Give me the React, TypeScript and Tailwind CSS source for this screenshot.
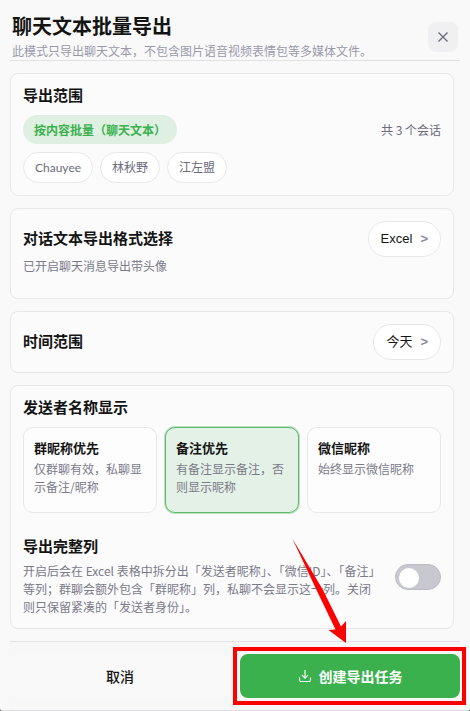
import React, { useState } from 'react'

const chats = ['Chauyee', '林秋野', '江左盟']

const nameModes = [
    { id: 'group', title: '群昵称优先', desc: '仅群聊有效，私聊显示备注/昵称' },
    { id: 'remark', title: '备注优先', desc: '有备注显示备注，否则显示昵称' },
    { id: 'nickname', title: '微信昵称', desc: '始终显示微信昵称' },
]

const Card = ({ children }: { children: React.ReactNode }) => (
    <section className="rounded-lg border border-[#e8e8ea] bg-[#fbfbfb] p-3">{children}</section>
)

const CardTitle = ({ children }: { children: React.ReactNode }) => (
    <h2 className="pb-[2px] text-[15px] leading-[18px] font-bold text-[#141414]">{children}</h2>
)

const PickerButton = ({ value }: { value: string }) => (
    <button
        type="button"
        className="flex h-9 items-center gap-2 rounded-full border border-[#e8e8ea] bg-white px-3 font-['Liberation_Sans','Noto_Sans_CJK_SC',sans-serif] text-[13px] text-[#141414]"
    >
        {value}
        <span className="font-bold text-[#8a8a9c]">&gt;</span>
    </button>
)

const App = () => {
    const [nameMode, setNameMode] = useState('remark')
    const [fullColumns, setFullColumns] = useState(false)

    return (
        <div className="bg-[#777777]">
            <main className="relative rounded-b-[3px] border-b border-[#dcdcde] bg-[#f9f9f9] px-[10px] font-['Noto_Sans_CJK_SC',sans-serif] text-[#141414]">
                {/* HEADER */}
                <header className="flex items-center justify-between border-b border-[#e2e2e5] pt-[14px] pr-[2px] pl-[2px]">
                    <div>
                        <h1 className="text-xl leading-6 font-bold">聊天文本批量导出</h1>
                        <p className="mt-1 text-xs leading-[18px] text-[#9a9aaa]">
                            此模式只导出聊天文本，不包含图片语音视频表情包等多媒体文件。
                        </p>
                    </div>
                    <button
                        type="button"
                        aria-label="关闭"
                        className="flex size-[30px] items-center justify-center rounded-lg bg-[#f0f0f2] text-[#6b6b7b]"
                    >
                        <svg width="12" height="12" viewBox="0 0 12 12" fill="none" stroke="currentColor" strokeWidth="1.4">
                            <path d="M1.5 1.5l9 9M10.5 1.5l-9 9" />
                        </svg>
                    </button>
                </header>

                <div className="flex flex-col gap-3 py-3 pr-[6px]">
                    {/* EXPORT SCOPE */}
                    <Card>
                        <CardTitle>导出范围</CardTitle>
                        <div className="mt-[9px] flex items-center justify-between">
                            <span className="rounded-full bg-[#dfefe2] px-[11px] text-xs leading-[29px] font-bold text-[#3bb14e]">
                                按内容批量（聊天文本）
                            </span>
                            <span className="text-xs text-[#6b6b7b]">共 3 个会话</span>
                        </div>
                        <div className="mt-2 flex flex-wrap gap-[7px]">
                            {chats.map((name) => (
                                <span
                                    key={name}
                                    className="rounded-full border border-[#e8e8ea] bg-white px-[11px] font-['Lato','Noto_Sans_CJK_SC',sans-serif] text-xs leading-[29px] text-[#6b6b7b]"
                                >
                                    {name}
                                </span>
                            ))}
                        </div>
                    </Card>

                    {/* FORMAT */}
                    <Card>
                        <div className="flex items-center justify-between">
                            <CardTitle>对话文本导出格式选择</CardTitle>
                            <PickerButton value="Excel" />
                        </div>
                        <p className="pb-[11px] text-xs leading-[18px] text-[#7a7a8a]">已开启聊天消息导出带头像</p>
                    </Card>

                    {/* TIME RANGE */}
                    <Card>
                        <div className="flex items-center justify-between">
                            <CardTitle>时间范围</CardTitle>
                            <PickerButton value="今天" />
                        </div>
                    </Card>

                    {/* SENDER NAME */}
                    <Card>
                        <CardTitle>发送者名称显示</CardTitle>
                        <div className="mt-[9px] grid grid-cols-3 gap-2">
                            {nameModes.map((mode) => (
                                <button
                                    key={mode.id}
                                    type="button"
                                    aria-pressed={nameMode === mode.id}
                                    onClick={() => setNameMode(mode.id)}
                                    className={`flex min-h-[86px] flex-col gap-[2px] rounded-[10px] border p-[10px] text-left ${
                                        nameMode === mode.id
                                            ? 'border-[#5cbb6b] bg-[#e4f1e7] ring-1 ring-[#5cbb6b]/40'
                                            : 'border-[#e8e8ea] bg-[#fdfdfd]'
                                    }`}
                                >
                                    <span className="text-[13px] leading-5 font-bold">{mode.title}</span>
                                    <span className="text-xs leading-[18px] text-[#7a7a8a]">{mode.desc}</span>
                                </button>
                            ))}
                        </div>

                        <div className="mt-6 flex items-center justify-between gap-4">
                            <div className="flex-1">
                                <CardTitle>
                                    <label htmlFor="full-columns">导出完整列</label>
                                </CardTitle>
                                <p className="mt-[5px] text-xs leading-[18px] text-[#7a7a8a]">
                                    开启后会在 Excel 表格中拆分出「发送者昵称」、「微信ID」、「备注」等列；群聊会额外包含「群昵称」列，私聊不会显示这一列。关闭则只保留紧凑的「发送者身份」。
                                </p>
                            </div>
                            <input
                                id="full-columns"
                                type="checkbox"
                                checked={fullColumns}
                                onChange={(e) => setFullColumns(e.target.checked)}
                                className="h-[26px] w-[46px] shrink-0 appearance-none rounded-full border border-[#bcbcc4] bg-[#c8c8d0] p-[3px] before:block before:size-5 before:rounded-full before:bg-white before:transition checked:bg-[#3bb14e] checked:before:translate-x-5"
                            />
                        </div>
                    </Card>
                </div>

                {/* FOOTER */}
                <footer className="grid grid-cols-2 gap-[10px] border-t border-[#e2e2e5] bg-[#f7f7f7] py-3 text-sm">
                    <button type="button" className="h-11 rounded-lg bg-[#f9f9f9] font-medium">
                        取消
                    </button>
                    <div className="relative">
                        <button
                            type="button"
                            className="flex h-11 w-full items-center justify-center gap-[7px] rounded-lg bg-[#3bb14e] font-bold text-white"
                        >
                            <svg width="14" height="14" viewBox="0 0 14 14" fill="none" stroke="currentColor" strokeWidth="1.1">
                                <path d="M7 1v8M4 6.2l3 3 3-3M1.5 8.5v2.8c0 .8.5 1.2 1.2 1.2h8.6c.7 0 1.2-.4 1.2-1.2V8.5" />
                            </svg>
                            创建导出任务
                        </button>
                        <div className="pointer-events-none absolute -top-[7px] -right-[6px] -bottom-[7px] -left-[7px] border-4 border-[#ff0000]" />
                        <svg
                            className="pointer-events-none absolute bottom-[55px] left-[52px]"
                            width="56"
                            height="105"
                            viewBox="0 0 56 105"
                            fill="#ff0000"
                        >
                            <path d="M.3.5L31 52l18 36.5 5-5.5v22L36.5 92l7-.5L24.5 52z" />
                        </svg>
                    </div>
                </footer>
            </main>
        </div>
    )
}

export default App
